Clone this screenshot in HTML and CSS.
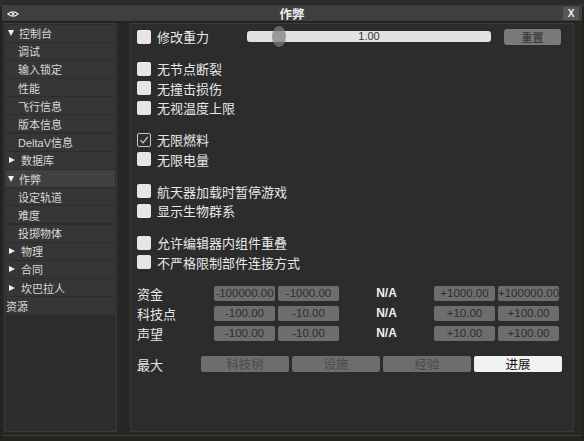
FILE: index.html
```html
<!DOCTYPE html>
<html lang="zh">
<head>
<meta charset="utf-8">
<title>作弊</title>
<link rel="stylesheet" href="styles.css">
</head>
<body>
<div class="top"></div>
<div class="window">
  <div class="titlebar">
    <div class="tb-left">
      <svg class="eye" width="12" height="6" viewBox="0 0 12 6"><path d="M0.8 3 Q6 -1.2 11.2 3 Q6 7.2 0.8 3 Z" fill="none" stroke="#e8e8e8" stroke-width="1.1"/><circle cx="6" cy="3" r="1.3" fill="#e8e8e8"/></svg>
    </div>
    <div class="title">作弊</div>
    <div class="tb-right"><span class="close">X</span></div>
  </div>
  <div class="main">
    <nav class="sidebar">
      <div class="item parent"><i class="tri down"></i>控制台</div>
      <div class="item child">调试</div>
      <div class="item child">输入锁定</div>
      <div class="item child">性能</div>
      <div class="item child">飞行信息</div>
      <div class="item child">版本信息</div>
      <div class="item child">DeltaV信息</div>
      <div class="item parent"><i class="tri right"></i>数据库</div>
      <div class="item parent active"><i class="tri down"></i>作弊</div>
      <div class="item child">设定轨道</div>
      <div class="item child">难度</div>
      <div class="item child">投掷物体</div>
      <div class="item parent"><i class="tri right"></i>物理</div>
      <div class="item parent"><i class="tri right"></i>合同</div>
      <div class="item parent"><i class="tri right"></i>坎巴拉人</div>
      <div class="item root">资源</div>
    </nav>
    <section class="content">
      <div class="group first">
        <div class="row">
          <span class="box"></span><span class="label grav">修改重力</span>
          <div class="slider"><span class="handle"></span><span class="sval">1.00</span></div>
          <span class="reset">重置</span>
        </div>
      </div>
      <div class="group">
        <div class="row"><span class="box"></span><span class="label">无节点断裂</span></div>
        <div class="row"><span class="box"></span><span class="label">无撞击损伤</span></div>
        <div class="row"><span class="box"></span><span class="label">无视温度上限</span></div>
      </div>
      <div class="group">
        <div class="row"><span class="box checked"><svg width="10" height="10" viewBox="0 0 10 10"><polyline points="1.5,5.2 4,7.8 8.8,1.8" fill="none" stroke="#cfcfcf" stroke-width="1.2"/></svg></span><span class="label">无限燃料</span></div>
        <div class="row"><span class="box"></span><span class="label">无限电量</span></div>
      </div>
      <div class="group">
        <div class="row"><span class="box"></span><span class="label">航天器加载时暂停游戏</span></div>
        <div class="row"><span class="box"></span><span class="label">显示生物群系</span></div>
      </div>
      <div class="group">
        <div class="row"><span class="box"></span><span class="label">允许编辑器内组件重叠</span></div>
        <div class="row"><span class="box"></span><span class="label">不严格限制部件连接方式</span></div>
      </div>
      <div class="res">
        <span class="rlabel">资金</span><span class="btn">-100000.00</span><span class="btn">-1000.00</span><span class="na">N/A</span><span class="btn">+1000.00</span><span class="btn">+100000.00</span>
        <span class="rlabel">科技点</span><span class="btn">-100.00</span><span class="btn">-10.00</span><span class="na">N/A</span><span class="btn">+10.00</span><span class="btn">+100.00</span>
        <span class="rlabel">声望</span><span class="btn">-100.00</span><span class="btn">-10.00</span><span class="na">N/A</span><span class="btn">+10.00</span><span class="btn">+100.00</span>
      </div>
      <div class="maxrow">
        <span class="rlabel">最大</span>
        <span class="tab">科技树</span>
        <span class="tab">设施</span>
        <span class="tab">经验</span>
        <span class="tab on">进展</span>
      </div>
    </section>
  </div>
</div>
</body>
</html>
```

FILE: styles.css
```css
* { box-sizing: border-box; }

body {
  margin: 0;
  width: 584px;
  height: 441px;
  overflow: hidden;
  background: #24241f;
  font-family: "Liberation Sans", "Noto Sans CJK SC", sans-serif;
  color: #e6e6e6;
}

.top {
  height: 6px;
  background: #2b2b2b;
  border-bottom: 1px solid #3e3e3e;
}

.window {
  width: 580px;
  margin-left: 2px;
  height: 430px;
  background: #272727;
  border-bottom: 1px solid #3c3c3c;
  display: flex;
  flex-direction: column;
}

.titlebar {
  height: 16px;
  background: #3f3f3f;
  border-bottom: 1px solid #1f1f1f;
  display: grid;
  grid-template-columns: 1fr auto 1fr;
  align-items: center;
}

.tb-left { display: flex; align-items: center; padding-left: 5px; }
.eye { display: block; }

.title {
  font-family: "Noto Sans CJK SC", sans-serif;
  font-size: 12.5px;
  font-weight: bold;
  color: #eeeeee;
  line-height: 15px;
}

.tb-right { display: flex; justify-content: flex-end; padding-right: 3px; }
.close {
  width: 16px;
  height: 13px;
  background: #565656;
  color: #eeeeee;
  font-size: 10px;
  font-weight: bold;
  line-height: 13px;
  text-align: center;
}

.main {
  flex: 1;
  min-height: 0;
  display: flex;
  gap: 13px;
  padding: 1px 8px 3px 2px;
}

.sidebar {
  width: 114px;
  background: #2d2d2d;
  border: 1px solid #3b3b3b;
  padding: 0.5px 1px 0;
  display: flex;
  flex-direction: column;
  gap: 1.2px;
}

.item {
  height: 17px;
  flex: none;
  background: #363636;
  font-family: "Liberation Sans", "Noto Sans CJK SC", sans-serif;
  font-size: 11px;
  color: #d8d8d8;
  display: flex;
  align-items: center;
  white-space: nowrap;
}
.item.parent { padding-left: 2px; }
.item.child { padding-left: 12px; }
.item.root { padding-left: 0; }
.item.active { background: #414141; }

.tri {
  display: inline-block;
  width: 0;
  height: 0;
  margin-right: 5px;
}
.tri.down {
  border-left: 3.5px solid transparent;
  border-right: 3.5px solid transparent;
  border-top: 6px solid #f0f0f0;
  margin-right: 5px;
}
.tri.right {
  border-top: 3.5px solid transparent;
  border-bottom: 3.5px solid transparent;
  border-left: 6px solid #f0f0f0;
  margin-left: 1px;
  margin-right: 6px;
}

.content {
  flex: 1;
  background: #2c2c2c;
  border: 1px solid #3a3a3a;
  padding: 3px 11px 0 6px;
}

.group { margin-top: 12.5px; }
.group.first { margin-top: 0; }

.row {
  height: 19.5px;
  display: flex;
  align-items: center;
}

.box {
  width: 14px;
  height: 14px;
  flex: none;
  background: #e6e6e6;
  border-radius: 2px;
}
.box.checked {
  background: #2f2f2f;
  border: 1px solid #c4c4c4;
  display: flex;
  align-items: center;
  justify-content: center;
}
.box.checked svg { display: block; }

.label {
  margin-left: 6px;
  font-family: "Noto Sans CJK SC", sans-serif;
  font-size: 13px;
  line-height: 1;
  color: #e8e8e8;
  white-space: nowrap;
}
.label.grav { width: 90px; flex: none; }

.slider {
  position: relative;
  width: 244px;
  height: 11px;
  flex: none;
  background: #e2e2e2;
  border-radius: 3px;
  text-align: center;
}
.sval {
  position: relative;
  font-size: 11px;
  line-height: 11px;
  color: #333333;
  display: block;
}
.handle {
  position: absolute;
  left: 25px;
  top: -5px;
  width: 14px;
  height: 21px;
  border-radius: 50%;
  background: rgba(125, 125, 125, 0.72);
}

.reset {
  margin-left: 13px;
  width: 57px;
  height: 16px;
  flex: none;
  background: #7a7a7a;
  border-radius: 3px;
  color: #404040;
  font-family: "Noto Sans CJK SC", sans-serif;
  font-size: 11px;
  font-weight: bold;
  line-height: 16px;
  text-align: center;
}

.res {
  margin-top: 11px;
  display: grid;
  grid-template-columns: 74px 61px 61px 89px 61px 61px;
  column-gap: 3px;
  grid-auto-rows: 20px;
  align-items: center;
}

.rlabel {
  font-family: "Noto Sans CJK SC", sans-serif;
  font-size: 13px;
  line-height: 1;
  color: #e8e8e8;
}

.btn {
  height: 15px;
  background: #6d6d6d;
  border-radius: 2px;
  color: #2e2e2e;
  font-size: 11.5px;
  line-height: 15px;
  text-align: center;
  white-space: nowrap;
  overflow: hidden;
}

.na {
  text-align: center;
  font-size: 12px;
  font-weight: bold;
  color: #eeeeee;
}

.maxrow {
  margin-top: 11px;
  height: 20px;
  display: grid;
  grid-template-columns: 61px repeat(4, 88px);
  column-gap: 3px;
  align-items: center;
}

.tab {
  height: 16px;
  background: #6d6d6d;
  border-radius: 2px;
  color: #4a4a4a;
  font-family: "Noto Sans CJK SC", sans-serif;
  font-size: 12.5px;
  line-height: 16px;
  text-align: center;
}
.tab.on {
  background: #f2f2f2;
  color: #151515;
}
```
